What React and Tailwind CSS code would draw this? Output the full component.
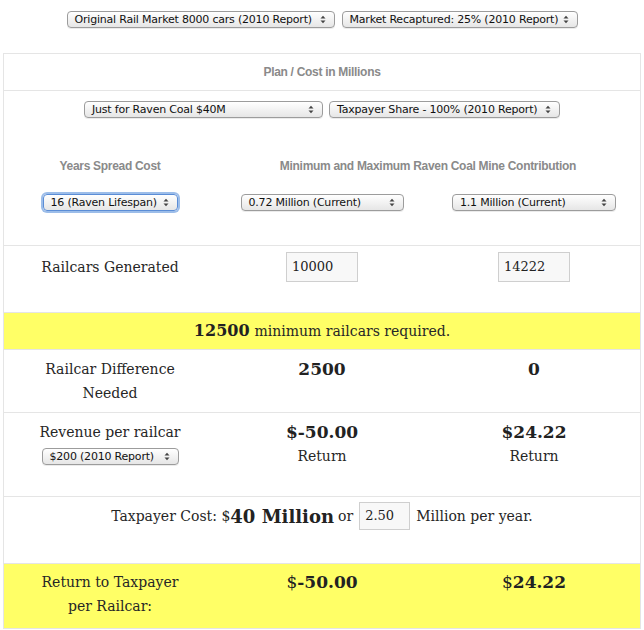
import React from "react";

const serif = { fontFamily: '"DejaVu Serif", Georgia, serif' };

function Arrows() {
  return (
    <svg width="6" height="9" viewBox="0 0 6 9" className="shrink-0">
      <path d="M0.5 3.5 L3 0.8 L5.5 3.5 Z" fill="#444" />
      <path d="M0.5 5.5 L3 8.2 L5.5 5.5 Z" fill="#444" />
    </svg>
  );
}

function Sel({ w, children, focus }) {
  return (
    <div
      className={`${w} h-[17px] flex items-center justify-between pl-[7px] pr-[8px] rounded-[4px] border bg-gradient-to-b from-white to-[#e6e6e6] text-[11px] tracking-[-0.2px] text-[#111] leading-none whitespace-nowrap ${
        focus
          ? "border-[#5b8dd6] shadow-[0_0_0_2px_#9cbde9]"
          : "border-[#9c9c9c] shadow-[0_1px_0_rgba(0,0,0,0.08)]"
      }`}
      style={{ fontFamily: '"DejaVu Sans", "Lucida Grande", sans-serif' }}
    >
      <span>{children}</span>
      <Arrows />
    </div>
  );
}

function Box({ w, h, children }) {
  return (
    <div
      className={`${w} ${h} border border-[#cfcfcf] bg-[#f8f8f8] flex items-center pl-[5px] text-[13px] text-[#222]`}
      style={serif}
    >
      {children}
    </div>
  );
}

function Head({ children }) {
  return (
    <div
      className="text-[12px] font-bold text-[#8a8a8a] tracking-[-0.3px] leading-[16px]"
      style={{ fontFamily: '"Liberation Sans", Arial, sans-serif' }}
    >
      {children}
    </div>
  );
}

export default function App() {
  return (
    <div className="w-[644px] bg-white pt-[11px] text-[#262626]">
      <div className="flex justify-center gap-[7px]">
        <Sel w="w-[268px]">Original Rail Market 8000 cars (2010 Report)</Sel>
        <Sel w="w-[236px]">Market Recaptured: 25% (2010 Report)</Sel>
      </div>

      <div className="mt-[25px] mx-[3px] w-[638px] border-x border-b border-[#e5e5e5]" style={serif}>
        {/* Row 1 */}
        <div className="h-[37px] border-t border-[#e5e5e5] flex items-center justify-center">
          <Head>Plan / Cost in Millions</Head>
        </div>

        {/* Row 2 */}
        <div className="h-[155px] border-t border-[#e5e5e5] pt-[10px]">
          <div className="flex justify-center gap-[6px]">
            <Sel w="w-[239px]">Just for Raven Coal $40M</Sel>
            <Sel w="w-[231px]">Taxpayer Share - 100% (2010 Report)</Sel>
          </div>
          <div className="grid grid-cols-3 mt-[40px] text-center">
            <Head>Years Spread Cost</Head>
            <div className="col-span-2">
              <Head>Minimum and Maximum Raven Coal Mine Contribution</Head>
            </div>
          </div>
          <div className="grid grid-cols-3 mt-[20px]">
            <div className="flex justify-center">
              <Sel w="w-[135px]" focus>16 (Raven Lifespan)</Sel>
            </div>
            <div className="flex justify-center">
              <Sel w="w-[163px]">0.72 Million (Current)</Sel>
            </div>
            <div className="flex justify-center">
              <Sel w="w-[164px]">1.1 Million (Current)</Sel>
            </div>
          </div>
        </div>

        {/* Row 3 */}
        <div className="h-[67px] border-t border-[#e5e5e5] pt-[6px] grid grid-cols-3 items-start text-[14px]">
          <div className="h-[30px] flex items-center justify-center">Railcars Generated</div>
          <div className="flex justify-center">
            <Box w="w-[72px]" h="h-[30px]">10000</Box>
          </div>
          <div className="flex justify-center">
            <Box w="w-[72px]" h="h-[30px]">14222</Box>
          </div>
        </div>

        {/* Row 4 */}
        <div className="h-[37px] border-t border-[#e5e5e5] bg-[#ffff66] flex items-center justify-center text-[14px] leading-[24px]">
          <span className="font-bold text-[16px] mr-[5px] text-[#222]">12500</span>
          <span>minimum railcars required.</span>
        </div>

        {/* Row 5 */}
        <div className="h-[63px] border-t border-[#e5e5e5] pt-[7px] grid grid-cols-3 text-center text-[14px] leading-[24px]">
          <div>
            Railcar Difference
            <br />
            Needed
          </div>
          <div className="font-bold text-[17px] text-[#222]">2500</div>
          <div className="font-bold text-[17px] text-[#222]">0</div>
        </div>

        {/* Row 6 */}
        <div className="h-[84px] border-t border-[#e5e5e5] pt-[7px] grid grid-cols-3 text-center text-[14px] leading-[24px]">
          <div className="flex flex-col items-center">
            <div>Revenue per railcar</div>
            <div className="mt-[4px]">
              <Sel w="w-[137px]">$200 (2010 Report)</Sel>
            </div>
          </div>
          <div>
            <div className="font-bold text-[17px] text-[#222]">$-50.00</div>
            <div>Return</div>
          </div>
          <div>
            <div className="font-bold text-[17px] text-[#222]">$24.22</div>
            <div>Return</div>
          </div>
        </div>

        {/* Row 7 */}
        <div className="h-[67px] border-t border-[#e5e5e5] pt-[5px] flex justify-center items-start text-[14px]">
          <div className="h-[28px] flex items-center whitespace-nowrap">
            <span>Taxpayer Cost: $</span>
            <span className="font-bold text-[18px] text-[#222]">40 Million</span>
            <span className="ml-[4px] mr-[6px]">or</span>
            <Box w="w-[51px]" h="h-[28px]">2.50</Box>
            <span className="ml-[6px]">Million per year.</span>
          </div>
        </div>

        {/* Row 8 */}
        <div className="h-[65px] border-t border-[#e5e5e5] bg-[#ffff66] pt-[6px] grid grid-cols-3 text-center text-[14px] leading-[24px]">
          <div>
            Return to Taxpayer
            <br />
            per Railcar:
          </div>
          <div className="text-[17px] text-[#222]">
            $<span className="font-bold">-50.00</span>
          </div>
          <div className="text-[17px] text-[#222]">
            $<span className="font-bold">24.22</span>
          </div>
        </div>
      </div>
    </div>
  );
}
